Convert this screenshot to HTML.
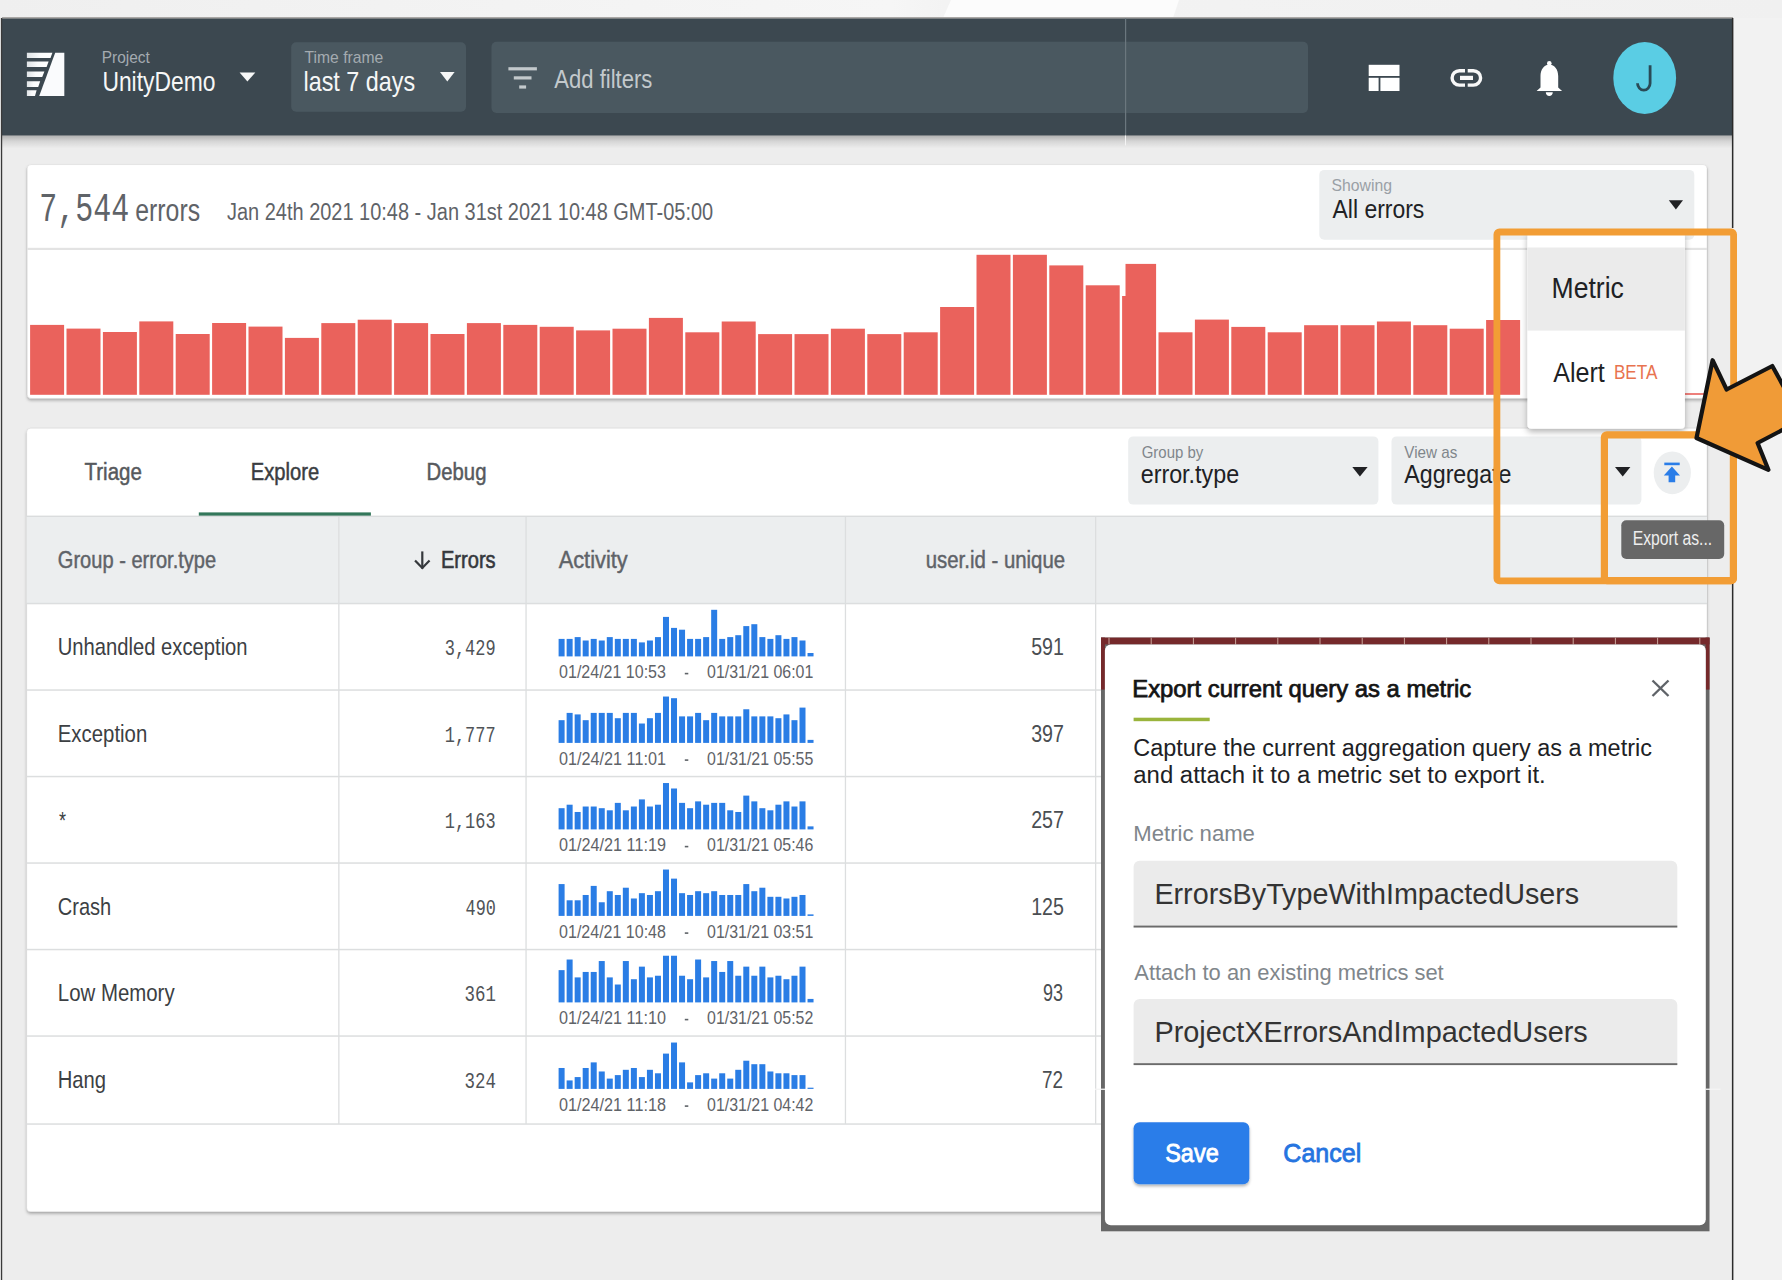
<!DOCTYPE html>
<html><head><meta charset="utf-8"><title>Backtrace explore</title>
<style>html,body{margin:0;padding:0;background:#ededed;overflow:hidden}svg{display:block}</style>
</head><body>
<svg width="1782" height="1280" viewBox="0 0 1782 1280">
<defs>
<filter id="cshadow" x="-5%" y="-5%" width="110%" height="115%"><feDropShadow dx="0" dy="2" stdDeviation="1.6" flood-color="#000" flood-opacity="0.28"/></filter>
<filter id="mshadow" x="-10%" y="-10%" width="130%" height="130%"><feDropShadow dx="0" dy="3" stdDeviation="3" flood-color="#000" flood-opacity="0.3"/></filter>
<filter id="bshadow" x="-10%" y="-10%" width="130%" height="130%"><feDropShadow dx="0" dy="2" stdDeviation="1.5" flood-color="#000" flood-opacity="0.3"/></filter>
<linearGradient id="hshadow" x1="0" y1="0" x2="0" y2="1"><stop offset="0" stop-color="#000" stop-opacity="0.26"/><stop offset="0.45" stop-color="#000" stop-opacity="0.10"/><stop offset="1" stop-color="#000" stop-opacity="0"/></linearGradient>
<linearGradient id="topg" x1="0" y1="0" x2="1" y2="0"><stop offset="0" stop-color="#efefef"/><stop offset="0.5" stop-color="#f6f6f6"/><stop offset="0.53" stop-color="#f3f3f3"/><stop offset="1" stop-color="#f0f0f0"/></linearGradient>
<linearGradient id="stripe" x1="0" y1="0" x2="1" y2="0"><stop offset="0" stop-color="#dfe3e6"/><stop offset="0.5" stop-color="#fafbfc"/><stop offset="1" stop-color="#ffffff"/></linearGradient>
</defs>
<rect x="0.00" y="0.00" width="1782.00" height="1280.00" fill="#ededed"/>
<rect x="0" y="0" width="1782" height="18" fill="url(#topg)"/>
<polygon points="951,0 1179,0 1173,18 943,18" fill="#fcfcfc"/>
<rect x="1733.00" y="18.00" width="49.00" height="1262.00" fill="#f2f2f2"/>
<rect x="2.00" y="18.00" width="1731.00" height="117.50" fill="#3c4850"/>
<rect x="2.00" y="17.00" width="1731.00" height="1.60" fill="#aaa8a6"/>
<rect x="2" y="135.4" width="1731" height="13" fill="url(#hshadow)"/>
<polygon points="55.2,52.7 64.3,52.7 64.3,95.9 39.2,95.9" fill="#fafbfd"/>
<polygon points="26.9,52.7 52.4,52.7 50.5,57.9 26.9,57.9" fill="url(#stripe)"/>
<polygon points="26.9,61.6 48.6,61.6 46.6,67.0 26.9,67.0" fill="url(#stripe)"/>
<polygon points="26.9,71.5 44.4,71.5 42.2,77.1 26.9,77.1" fill="url(#stripe)"/>
<polygon points="26.9,81.3 40.2,81.3 38.2,87.0 26.9,87.0" fill="url(#stripe)"/>
<polygon points="26.9,90.2 36.6,90.2 35.0,95.9 26.9,95.9" fill="url(#stripe)"/>
<polygon points="239.6,72.4 255.3,72.4 247.4,81.5" fill="#f6f7f7"/>
<rect x="291.20" y="42.20" width="174.80" height="69.50" fill="#4a5860" rx="5.0"/>
<polygon points="440.0,72.0 454.6,72.0 447.3,81.5" fill="#f6f7f7"/>
<rect x="491.50" y="41.70" width="816.50" height="71.20" fill="#4a5860" rx="5.0"/>
<rect x="508.40" y="67.20" width="28.50" height="3.20" fill="#c3c9cc"/>
<rect x="513.80" y="76.30" width="17.70" height="3.20" fill="#c3c9cc"/>
<rect x="519.20" y="85.40" width="6.90" height="3.20" fill="#c3c9cc"/>
<rect x="1125.00" y="18.00" width="1.20" height="117.00" fill="#6b777e"/>
<rect x="1125.00" y="135.40" width="1.00" height="10.00" fill="#f4f4f4"/>
<rect x="1368.70" y="64.80" width="30.80" height="11.20" fill="#ffffff"/>
<rect x="1368.70" y="77.80" width="9.90" height="13.20" fill="#ffffff"/>
<rect x="1380.40" y="77.80" width="19.10" height="13.20" fill="#ffffff"/>
<g fill="none" stroke="#f8f8f8" stroke-width="3.4"><path d="M1465,70.7 h-5.6 a7.3,7.2 0 0 0 0,14.4 h5.6"/><path d="M1467.7,70.7 h5.6 a7.3,7.2 0 0 1 0,14.4 h-5.6"/></g>
<rect x="1460.00" y="75.80" width="13.00" height="4.20" fill="#f8f8f8"/>
<circle cx="1549.3" cy="63.2" r="2.3" fill="#ffffff"/><path d="M1549.3,64.6 c5.3,0 8.9,5.2 8.9,11.5 V87.4 l3.9,3.6 H1536.6 l3.9,-3.6 V76.1 c0,-6.3 3.6,-11.5 8.8,-11.5 z M1545.8,92.2 h7 c0,2.2 -1.6,3.7 -3.5,3.7 s-3.5,-1.5 -3.5,-3.7 z" fill="#ffffff"/>
<ellipse cx="1644.7" cy="77.9" rx="31.4" ry="36.0" fill="#5acde4"/>
<path d="M1650.1,65.2 V83.2 A6.3,7.0 0 0 1 1637.5,83.2" fill="none" stroke="#2a4a56" stroke-width="2.8"/>
<rect x="27.2" y="164.6" width="1679.8" height="233.8" rx="4" fill="#ffffff" stroke="#000" stroke-opacity="0.07" stroke-width="1" filter="url(#cshadow)"/>
<rect x="27.20" y="247.80" width="1679.80" height="2.20" fill="#e3e3e3"/>
<rect x="1319.30" y="169.90" width="375.00" height="69.80" fill="#eceeef" rx="5.0"/>
<polygon points="1668.8,200.3 1683.0,200.3 1675.9,209.5" fill="#202124"/>
<rect x="30.10" y="324.90" width="34.00" height="69.90" fill="#ea625c"/>
<rect x="66.50" y="328.60" width="34.00" height="66.20" fill="#ea625c"/>
<rect x="102.90" y="332.00" width="34.00" height="62.80" fill="#ea625c"/>
<rect x="139.30" y="321.40" width="34.00" height="73.40" fill="#ea625c"/>
<rect x="175.70" y="334.00" width="34.00" height="60.80" fill="#ea625c"/>
<rect x="212.10" y="323.00" width="34.00" height="71.80" fill="#ea625c"/>
<rect x="248.50" y="326.60" width="34.00" height="68.20" fill="#ea625c"/>
<rect x="284.90" y="337.90" width="34.00" height="56.90" fill="#ea625c"/>
<rect x="321.30" y="323.10" width="34.00" height="71.70" fill="#ea625c"/>
<rect x="357.70" y="319.70" width="34.00" height="75.10" fill="#ea625c"/>
<rect x="394.10" y="323.10" width="34.00" height="71.70" fill="#ea625c"/>
<rect x="430.50" y="334.00" width="34.00" height="60.80" fill="#ea625c"/>
<rect x="466.90" y="323.10" width="34.00" height="71.70" fill="#ea625c"/>
<rect x="503.30" y="324.90" width="34.00" height="69.90" fill="#ea625c"/>
<rect x="539.70" y="326.80" width="34.00" height="68.00" fill="#ea625c"/>
<rect x="576.10" y="330.40" width="34.00" height="64.40" fill="#ea625c"/>
<rect x="612.50" y="328.70" width="34.00" height="66.10" fill="#ea625c"/>
<rect x="648.90" y="317.90" width="34.00" height="76.90" fill="#ea625c"/>
<rect x="685.30" y="332.30" width="34.00" height="62.50" fill="#ea625c"/>
<rect x="721.70" y="321.50" width="34.00" height="73.30" fill="#ea625c"/>
<rect x="758.10" y="334.10" width="34.00" height="60.70" fill="#ea625c"/>
<rect x="794.50" y="334.10" width="34.00" height="60.70" fill="#ea625c"/>
<rect x="830.90" y="328.70" width="34.00" height="66.10" fill="#ea625c"/>
<rect x="867.30" y="334.10" width="34.00" height="60.70" fill="#ea625c"/>
<rect x="903.70" y="332.30" width="34.00" height="62.50" fill="#ea625c"/>
<rect x="940.10" y="307.00" width="34.00" height="87.80" fill="#ea625c"/>
<rect x="976.50" y="254.80" width="34.00" height="140.00" fill="#ea625c"/>
<rect x="1012.90" y="254.80" width="34.00" height="140.00" fill="#ea625c"/>
<rect x="1049.30" y="265.40" width="34.00" height="129.40" fill="#ea625c"/>
<rect x="1085.70" y="285.30" width="34.00" height="109.50" fill="#ea625c"/>
<rect x="1122.10" y="263.90" width="34.00" height="130.90" fill="#ea625c"/>
<rect x="1158.50" y="332.30" width="34.00" height="62.50" fill="#ea625c"/>
<rect x="1194.90" y="319.60" width="34.00" height="75.20" fill="#ea625c"/>
<rect x="1231.30" y="326.90" width="34.00" height="67.90" fill="#ea625c"/>
<rect x="1267.70" y="332.30" width="34.00" height="62.50" fill="#ea625c"/>
<rect x="1304.10" y="325.20" width="34.00" height="69.60" fill="#ea625c"/>
<rect x="1340.50" y="325.20" width="34.00" height="69.60" fill="#ea625c"/>
<rect x="1376.90" y="321.50" width="34.00" height="73.30" fill="#ea625c"/>
<rect x="1413.30" y="325.20" width="34.00" height="69.60" fill="#ea625c"/>
<rect x="1449.70" y="328.70" width="34.00" height="66.10" fill="#ea625c"/>
<rect x="1486.10" y="320.00" width="34.00" height="74.80" fill="#ea625c"/>
<rect x="1121.60" y="263.00" width="3.90" height="33.00" fill="#ffffff"/>
<rect x="26.7" y="428.2" width="1680.3" height="783.6" rx="4" fill="#ffffff" stroke="#000" stroke-opacity="0.07" stroke-width="1" filter="url(#cshadow)"/>
<rect x="198.80" y="512.40" width="172.10" height="3.80" fill="#33775a"/>
<rect x="26.70" y="515.60" width="1680.30" height="1.40" fill="#dadcdd"/>
<rect x="1128.20" y="436.40" width="250.20" height="68.20" fill="#eceeef" rx="5.0"/>
<polygon points="1352.3,467.0 1367.6,467.0 1359.9,476.4" fill="#202124"/>
<rect x="1391.50" y="436.40" width="249.90" height="68.20" fill="#eceeef" rx="5.0"/>
<polygon points="1615.0,467.0 1630.4,467.0 1622.7,476.4" fill="#202124"/>
<ellipse cx="1672.3" cy="472.8" rx="18.6" ry="21.4" fill="#eceeef"/>
<rect x="1664.30" y="462.60" width="15.40" height="2.60" fill="#2a7de8"/>
<polygon points="1671.9,466.5 1680.0,475.5 1675.2,475.5 1675.2,482.2 1668.6,482.2 1668.6,475.5 1663.8,475.5" fill="#2a7de8"/>
<rect x="26.70" y="517.00" width="1680.30" height="86.00" fill="#eceeef"/>
<rect x="26.70" y="602.80" width="1680.30" height="1.50" fill="#dcdedf"/>
<rect x="26.70" y="689.30" width="1680.30" height="1.50" fill="#dcdedf"/>
<rect x="26.70" y="775.80" width="1680.30" height="1.50" fill="#dcdedf"/>
<rect x="26.70" y="862.30" width="1680.30" height="1.50" fill="#dcdedf"/>
<rect x="26.70" y="948.80" width="1680.30" height="1.50" fill="#dcdedf"/>
<rect x="26.70" y="1035.30" width="1680.30" height="1.50" fill="#dcdedf"/>
<rect x="26.70" y="1123.30" width="1680.30" height="1.50" fill="#dcdedf"/>
<rect x="338.20" y="517.00" width="1.30" height="607.00" fill="#dcdedf"/>
<rect x="525.40" y="517.00" width="1.30" height="607.00" fill="#dcdedf"/>
<rect x="844.80" y="517.00" width="1.30" height="607.00" fill="#dcdedf"/>
<rect x="1095.00" y="517.00" width="1.30" height="607.00" fill="#dcdedf"/>
<g stroke="#35383c" stroke-width="2.2" fill="none" stroke-linecap="square"><path d="M422.3,552.5 v15"/><path d="M415.8,561.2 l6.5,6.8 l6.5,-6.8"/></g>
<rect x="558.60" y="638.90" width="6.00" height="17.50" fill="#2a7de5"/>
<rect x="566.63" y="638.90" width="6.00" height="17.50" fill="#2a7de5"/>
<rect x="574.66" y="637.10" width="6.00" height="19.30" fill="#2a7de5"/>
<rect x="582.69" y="640.50" width="6.00" height="15.90" fill="#2a7de5"/>
<rect x="590.72" y="638.90" width="6.00" height="17.50" fill="#2a7de5"/>
<rect x="598.75" y="640.50" width="6.00" height="15.90" fill="#2a7de5"/>
<rect x="606.78" y="637.10" width="6.00" height="19.30" fill="#2a7de5"/>
<rect x="614.81" y="638.90" width="6.00" height="17.50" fill="#2a7de5"/>
<rect x="622.84" y="638.90" width="6.00" height="17.50" fill="#2a7de5"/>
<rect x="630.87" y="638.90" width="6.00" height="17.50" fill="#2a7de5"/>
<rect x="638.90" y="642.40" width="6.00" height="14.00" fill="#2a7de5"/>
<rect x="646.93" y="640.50" width="6.00" height="15.90" fill="#2a7de5"/>
<rect x="654.96" y="637.10" width="6.00" height="19.30" fill="#2a7de5"/>
<rect x="662.99" y="616.90" width="6.00" height="39.50" fill="#2a7de5"/>
<rect x="671.02" y="627.90" width="6.00" height="28.50" fill="#2a7de5"/>
<rect x="679.05" y="629.70" width="6.00" height="26.70" fill="#2a7de5"/>
<rect x="687.08" y="638.90" width="6.00" height="17.50" fill="#2a7de5"/>
<rect x="695.11" y="638.90" width="6.00" height="17.50" fill="#2a7de5"/>
<rect x="703.14" y="637.10" width="6.00" height="19.30" fill="#2a7de5"/>
<rect x="711.17" y="609.80" width="6.00" height="46.60" fill="#2a7de5"/>
<rect x="719.20" y="638.90" width="6.00" height="17.50" fill="#2a7de5"/>
<rect x="727.23" y="637.10" width="6.00" height="19.30" fill="#2a7de5"/>
<rect x="735.26" y="635.20" width="6.00" height="21.20" fill="#2a7de5"/>
<rect x="743.29" y="626.10" width="6.00" height="30.30" fill="#2a7de5"/>
<rect x="751.32" y="624.20" width="6.00" height="32.20" fill="#2a7de5"/>
<rect x="759.35" y="637.10" width="6.00" height="19.30" fill="#2a7de5"/>
<rect x="767.38" y="638.90" width="6.00" height="17.50" fill="#2a7de5"/>
<rect x="775.41" y="635.20" width="6.00" height="21.20" fill="#2a7de5"/>
<rect x="783.44" y="638.90" width="6.00" height="17.50" fill="#2a7de5"/>
<rect x="791.47" y="637.10" width="6.00" height="19.30" fill="#2a7de5"/>
<rect x="799.50" y="640.50" width="6.00" height="15.90" fill="#2a7de5"/>
<rect x="807.53" y="653.00" width="6.00" height="3.40" fill="#2a7de5"/>
<rect x="558.60" y="720.17" width="6.00" height="22.73" fill="#2a7de5"/>
<rect x="566.63" y="712.90" width="6.00" height="30.00" fill="#2a7de5"/>
<rect x="574.66" y="714.42" width="6.00" height="28.48" fill="#2a7de5"/>
<rect x="582.69" y="720.17" width="6.00" height="22.73" fill="#2a7de5"/>
<rect x="590.72" y="712.90" width="6.00" height="30.00" fill="#2a7de5"/>
<rect x="598.75" y="712.90" width="6.00" height="30.00" fill="#2a7de5"/>
<rect x="606.78" y="712.90" width="6.00" height="30.00" fill="#2a7de5"/>
<rect x="614.81" y="718.20" width="6.00" height="24.70" fill="#2a7de5"/>
<rect x="622.84" y="712.90" width="6.00" height="30.00" fill="#2a7de5"/>
<rect x="630.87" y="712.90" width="6.00" height="30.00" fill="#2a7de5"/>
<rect x="638.90" y="723.51" width="6.00" height="19.39" fill="#2a7de5"/>
<rect x="646.93" y="718.20" width="6.00" height="24.70" fill="#2a7de5"/>
<rect x="654.96" y="712.90" width="6.00" height="30.00" fill="#2a7de5"/>
<rect x="662.99" y="696.54" width="6.00" height="46.36" fill="#2a7de5"/>
<rect x="671.02" y="698.20" width="6.00" height="44.70" fill="#2a7de5"/>
<rect x="679.05" y="716.38" width="6.00" height="26.52" fill="#2a7de5"/>
<rect x="687.08" y="716.38" width="6.00" height="26.52" fill="#2a7de5"/>
<rect x="695.11" y="712.90" width="6.00" height="30.00" fill="#2a7de5"/>
<rect x="703.14" y="720.17" width="6.00" height="22.73" fill="#2a7de5"/>
<rect x="711.17" y="712.90" width="6.00" height="30.00" fill="#2a7de5"/>
<rect x="719.20" y="716.38" width="6.00" height="26.52" fill="#2a7de5"/>
<rect x="727.23" y="716.38" width="6.00" height="26.52" fill="#2a7de5"/>
<rect x="735.26" y="716.38" width="6.00" height="26.52" fill="#2a7de5"/>
<rect x="743.29" y="709.26" width="6.00" height="33.64" fill="#2a7de5"/>
<rect x="751.32" y="716.38" width="6.00" height="26.52" fill="#2a7de5"/>
<rect x="759.35" y="716.38" width="6.00" height="26.52" fill="#2a7de5"/>
<rect x="767.38" y="716.38" width="6.00" height="26.52" fill="#2a7de5"/>
<rect x="775.41" y="718.20" width="6.00" height="24.70" fill="#2a7de5"/>
<rect x="783.44" y="714.42" width="6.00" height="28.48" fill="#2a7de5"/>
<rect x="791.47" y="720.17" width="6.00" height="22.73" fill="#2a7de5"/>
<rect x="799.50" y="707.60" width="6.00" height="35.30" fill="#2a7de5"/>
<rect x="807.53" y="739.87" width="6.00" height="3.03" fill="#2a7de5"/>
<rect x="558.60" y="808.19" width="6.00" height="21.21" fill="#2a7de5"/>
<rect x="566.63" y="804.70" width="6.00" height="24.70" fill="#2a7de5"/>
<rect x="574.66" y="811.98" width="6.00" height="17.42" fill="#2a7de5"/>
<rect x="582.69" y="806.52" width="6.00" height="22.88" fill="#2a7de5"/>
<rect x="590.72" y="806.52" width="6.00" height="22.88" fill="#2a7de5"/>
<rect x="598.75" y="808.19" width="6.00" height="21.21" fill="#2a7de5"/>
<rect x="606.78" y="810.31" width="6.00" height="19.09" fill="#2a7de5"/>
<rect x="614.81" y="802.88" width="6.00" height="26.52" fill="#2a7de5"/>
<rect x="622.84" y="810.31" width="6.00" height="19.09" fill="#2a7de5"/>
<rect x="630.87" y="806.52" width="6.00" height="22.88" fill="#2a7de5"/>
<rect x="638.90" y="799.40" width="6.00" height="30.00" fill="#2a7de5"/>
<rect x="646.93" y="806.52" width="6.00" height="22.88" fill="#2a7de5"/>
<rect x="654.96" y="804.70" width="6.00" height="24.70" fill="#2a7de5"/>
<rect x="662.99" y="783.04" width="6.00" height="46.36" fill="#2a7de5"/>
<rect x="671.02" y="788.49" width="6.00" height="40.91" fill="#2a7de5"/>
<rect x="679.05" y="802.88" width="6.00" height="26.52" fill="#2a7de5"/>
<rect x="687.08" y="808.19" width="6.00" height="21.21" fill="#2a7de5"/>
<rect x="695.11" y="801.37" width="6.00" height="28.03" fill="#2a7de5"/>
<rect x="703.14" y="804.70" width="6.00" height="24.70" fill="#2a7de5"/>
<rect x="711.17" y="802.88" width="6.00" height="26.52" fill="#2a7de5"/>
<rect x="719.20" y="802.88" width="6.00" height="26.52" fill="#2a7de5"/>
<rect x="727.23" y="810.31" width="6.00" height="19.09" fill="#2a7de5"/>
<rect x="735.26" y="811.98" width="6.00" height="17.42" fill="#2a7de5"/>
<rect x="743.29" y="795.61" width="6.00" height="33.79" fill="#2a7de5"/>
<rect x="751.32" y="801.37" width="6.00" height="28.03" fill="#2a7de5"/>
<rect x="759.35" y="808.19" width="6.00" height="21.21" fill="#2a7de5"/>
<rect x="767.38" y="810.31" width="6.00" height="19.09" fill="#2a7de5"/>
<rect x="775.41" y="804.70" width="6.00" height="24.70" fill="#2a7de5"/>
<rect x="783.44" y="801.37" width="6.00" height="28.03" fill="#2a7de5"/>
<rect x="791.47" y="806.52" width="6.00" height="22.88" fill="#2a7de5"/>
<rect x="799.50" y="801.37" width="6.00" height="28.03" fill="#2a7de5"/>
<rect x="807.53" y="826.37" width="6.00" height="3.03" fill="#2a7de5"/>
<rect x="558.60" y="884.08" width="6.00" height="31.82" fill="#2a7de5"/>
<rect x="566.63" y="900.29" width="6.00" height="15.61" fill="#2a7de5"/>
<rect x="574.66" y="900.29" width="6.00" height="15.61" fill="#2a7de5"/>
<rect x="582.69" y="894.99" width="6.00" height="20.91" fill="#2a7de5"/>
<rect x="590.72" y="885.90" width="6.00" height="30.00" fill="#2a7de5"/>
<rect x="598.75" y="902.26" width="6.00" height="13.64" fill="#2a7de5"/>
<rect x="606.78" y="891.20" width="6.00" height="24.70" fill="#2a7de5"/>
<rect x="614.81" y="894.99" width="6.00" height="20.91" fill="#2a7de5"/>
<rect x="622.84" y="887.72" width="6.00" height="28.18" fill="#2a7de5"/>
<rect x="630.87" y="898.48" width="6.00" height="17.42" fill="#2a7de5"/>
<rect x="638.90" y="893.17" width="6.00" height="22.73" fill="#2a7de5"/>
<rect x="646.93" y="894.99" width="6.00" height="20.91" fill="#2a7de5"/>
<rect x="654.96" y="891.20" width="6.00" height="24.70" fill="#2a7de5"/>
<rect x="662.99" y="869.54" width="6.00" height="46.36" fill="#2a7de5"/>
<rect x="671.02" y="878.63" width="6.00" height="37.27" fill="#2a7de5"/>
<rect x="679.05" y="893.17" width="6.00" height="22.73" fill="#2a7de5"/>
<rect x="687.08" y="894.99" width="6.00" height="20.91" fill="#2a7de5"/>
<rect x="695.11" y="891.20" width="6.00" height="24.70" fill="#2a7de5"/>
<rect x="703.14" y="893.17" width="6.00" height="22.73" fill="#2a7de5"/>
<rect x="711.17" y="891.20" width="6.00" height="24.70" fill="#2a7de5"/>
<rect x="719.20" y="894.99" width="6.00" height="20.91" fill="#2a7de5"/>
<rect x="727.23" y="894.99" width="6.00" height="20.91" fill="#2a7de5"/>
<rect x="735.26" y="894.99" width="6.00" height="20.91" fill="#2a7de5"/>
<rect x="743.29" y="884.08" width="6.00" height="31.82" fill="#2a7de5"/>
<rect x="751.32" y="891.20" width="6.00" height="24.70" fill="#2a7de5"/>
<rect x="759.35" y="887.72" width="6.00" height="28.18" fill="#2a7de5"/>
<rect x="767.38" y="896.81" width="6.00" height="19.09" fill="#2a7de5"/>
<rect x="775.41" y="896.81" width="6.00" height="19.09" fill="#2a7de5"/>
<rect x="783.44" y="898.48" width="6.00" height="17.42" fill="#2a7de5"/>
<rect x="791.47" y="896.81" width="6.00" height="19.09" fill="#2a7de5"/>
<rect x="799.50" y="894.99" width="6.00" height="20.91" fill="#2a7de5"/>
<rect x="807.53" y="914.38" width="6.00" height="1.52" fill="#2a7de5"/>
<rect x="558.60" y="970.13" width="6.00" height="32.27" fill="#2a7de5"/>
<rect x="566.63" y="959.52" width="6.00" height="42.88" fill="#2a7de5"/>
<rect x="574.66" y="977.40" width="6.00" height="25.00" fill="#2a7de5"/>
<rect x="582.69" y="971.95" width="6.00" height="30.45" fill="#2a7de5"/>
<rect x="590.72" y="971.95" width="6.00" height="30.45" fill="#2a7de5"/>
<rect x="598.75" y="961.04" width="6.00" height="41.36" fill="#2a7de5"/>
<rect x="606.78" y="977.40" width="6.00" height="25.00" fill="#2a7de5"/>
<rect x="614.81" y="984.52" width="6.00" height="17.88" fill="#2a7de5"/>
<rect x="622.84" y="961.04" width="6.00" height="41.36" fill="#2a7de5"/>
<rect x="630.87" y="979.22" width="6.00" height="23.18" fill="#2a7de5"/>
<rect x="638.90" y="966.64" width="6.00" height="35.76" fill="#2a7de5"/>
<rect x="646.93" y="977.40" width="6.00" height="25.00" fill="#2a7de5"/>
<rect x="654.96" y="975.73" width="6.00" height="26.67" fill="#2a7de5"/>
<rect x="662.99" y="955.73" width="6.00" height="46.67" fill="#2a7de5"/>
<rect x="671.02" y="955.73" width="6.00" height="46.67" fill="#2a7de5"/>
<rect x="679.05" y="975.73" width="6.00" height="26.67" fill="#2a7de5"/>
<rect x="687.08" y="979.22" width="6.00" height="23.18" fill="#2a7de5"/>
<rect x="695.11" y="959.52" width="6.00" height="42.88" fill="#2a7de5"/>
<rect x="703.14" y="977.40" width="6.00" height="25.00" fill="#2a7de5"/>
<rect x="711.17" y="961.04" width="6.00" height="41.36" fill="#2a7de5"/>
<rect x="719.20" y="971.95" width="6.00" height="30.45" fill="#2a7de5"/>
<rect x="727.23" y="961.04" width="6.00" height="41.36" fill="#2a7de5"/>
<rect x="735.26" y="975.73" width="6.00" height="26.67" fill="#2a7de5"/>
<rect x="743.29" y="966.64" width="6.00" height="35.76" fill="#2a7de5"/>
<rect x="751.32" y="975.73" width="6.00" height="26.67" fill="#2a7de5"/>
<rect x="759.35" y="966.64" width="6.00" height="35.76" fill="#2a7de5"/>
<rect x="767.38" y="977.40" width="6.00" height="25.00" fill="#2a7de5"/>
<rect x="775.41" y="975.73" width="6.00" height="26.67" fill="#2a7de5"/>
<rect x="783.44" y="979.22" width="6.00" height="23.18" fill="#2a7de5"/>
<rect x="791.47" y="975.73" width="6.00" height="26.67" fill="#2a7de5"/>
<rect x="799.50" y="966.64" width="6.00" height="35.76" fill="#2a7de5"/>
<rect x="807.53" y="998.92" width="6.00" height="3.48" fill="#2a7de5"/>
<rect x="558.60" y="1067.99" width="6.00" height="20.91" fill="#2a7de5"/>
<rect x="566.63" y="1080.42" width="6.00" height="8.48" fill="#2a7de5"/>
<rect x="574.66" y="1077.08" width="6.00" height="11.82" fill="#2a7de5"/>
<rect x="582.69" y="1067.99" width="6.00" height="20.91" fill="#2a7de5"/>
<rect x="590.72" y="1062.38" width="6.00" height="26.52" fill="#2a7de5"/>
<rect x="598.75" y="1071.48" width="6.00" height="17.42" fill="#2a7de5"/>
<rect x="606.78" y="1078.60" width="6.00" height="10.30" fill="#2a7de5"/>
<rect x="614.81" y="1075.11" width="6.00" height="13.79" fill="#2a7de5"/>
<rect x="622.84" y="1069.81" width="6.00" height="19.09" fill="#2a7de5"/>
<rect x="630.87" y="1067.99" width="6.00" height="20.91" fill="#2a7de5"/>
<rect x="638.90" y="1077.08" width="6.00" height="11.82" fill="#2a7de5"/>
<rect x="646.93" y="1069.81" width="6.00" height="19.09" fill="#2a7de5"/>
<rect x="654.96" y="1073.29" width="6.00" height="15.61" fill="#2a7de5"/>
<rect x="662.99" y="1053.60" width="6.00" height="35.30" fill="#2a7de5"/>
<rect x="671.02" y="1042.54" width="6.00" height="46.36" fill="#2a7de5"/>
<rect x="679.05" y="1062.38" width="6.00" height="26.52" fill="#2a7de5"/>
<rect x="687.08" y="1082.38" width="6.00" height="6.52" fill="#2a7de5"/>
<rect x="695.11" y="1075.11" width="6.00" height="13.79" fill="#2a7de5"/>
<rect x="703.14" y="1073.29" width="6.00" height="15.61" fill="#2a7de5"/>
<rect x="711.17" y="1078.60" width="6.00" height="10.30" fill="#2a7de5"/>
<rect x="719.20" y="1073.29" width="6.00" height="15.61" fill="#2a7de5"/>
<rect x="727.23" y="1078.60" width="6.00" height="10.30" fill="#2a7de5"/>
<rect x="735.26" y="1069.81" width="6.00" height="19.09" fill="#2a7de5"/>
<rect x="743.29" y="1060.72" width="6.00" height="28.18" fill="#2a7de5"/>
<rect x="751.32" y="1064.20" width="6.00" height="24.70" fill="#2a7de5"/>
<rect x="759.35" y="1064.20" width="6.00" height="24.70" fill="#2a7de5"/>
<rect x="767.38" y="1071.48" width="6.00" height="17.42" fill="#2a7de5"/>
<rect x="775.41" y="1073.29" width="6.00" height="15.61" fill="#2a7de5"/>
<rect x="783.44" y="1073.29" width="6.00" height="15.61" fill="#2a7de5"/>
<rect x="791.47" y="1075.11" width="6.00" height="13.79" fill="#2a7de5"/>
<rect x="799.50" y="1075.11" width="6.00" height="13.79" fill="#2a7de5"/>
<rect x="807.53" y="1087.69" width="6.00" height="1.21" fill="#2a7de5"/>
<rect x="1685.00" y="393.20" width="20.00" height="1.60" fill="#ea625c"/>
<rect x="1527.4" y="232" width="157.5" height="196.8" rx="4" fill="#ffffff" filter="url(#mshadow)"/>
<rect x="1527.40" y="247.50" width="157.50" height="83.10" fill="#ebebeb"/>
<rect x="1621.30" y="520.20" width="102.90" height="38.80" fill="#676767" rx="5.0"/>
<rect x="1101.00" y="637.60" width="608.50" height="593.70" fill="#676767"/>
<rect x="1101.00" y="637.60" width="608.50" height="6.80" fill="#75292b"/>
<rect x="1101.00" y="637.60" width="3.90" height="52.00" fill="#75292b"/>
<rect x="1705.60" y="637.60" width="3.90" height="52.00" fill="#75292b"/>
<rect x="1108.50" y="637.60" width="1.00" height="6.80" fill="#c9a59b"/>
<rect x="1150.70" y="637.60" width="1.00" height="6.80" fill="#c9a59b"/>
<rect x="1192.90" y="637.60" width="1.00" height="6.80" fill="#c9a59b"/>
<rect x="1235.10" y="637.60" width="1.00" height="6.80" fill="#c9a59b"/>
<rect x="1277.30" y="637.60" width="1.00" height="6.80" fill="#c9a59b"/>
<rect x="1319.50" y="637.60" width="1.00" height="6.80" fill="#c9a59b"/>
<rect x="1361.70" y="637.60" width="1.00" height="6.80" fill="#c9a59b"/>
<rect x="1403.90" y="637.60" width="1.00" height="6.80" fill="#c9a59b"/>
<rect x="1446.10" y="637.60" width="1.00" height="6.80" fill="#c9a59b"/>
<rect x="1488.30" y="637.60" width="1.00" height="6.80" fill="#c9a59b"/>
<rect x="1530.50" y="637.60" width="1.00" height="6.80" fill="#c9a59b"/>
<rect x="1572.70" y="637.60" width="1.00" height="6.80" fill="#c9a59b"/>
<rect x="1614.90" y="637.60" width="1.00" height="6.80" fill="#c9a59b"/>
<rect x="1657.10" y="637.60" width="1.00" height="6.80" fill="#c9a59b"/>
<rect x="1699.30" y="637.60" width="1.00" height="6.80" fill="#c9a59b"/>
<rect x="1104.90" y="644.40" width="600.90" height="580.80" fill="#ffffff" rx="6.0"/>
<rect x="1095.00" y="1088.60" width="10.00" height="1.30" fill="#f4f4f4"/>
<rect x="1705.60" y="1088.60" width="15.00" height="1.30" fill="#f4f4f4"/>
<g stroke="#5f6368" stroke-width="2.4"><path d="M1652.5,680.5 L1668.5,696.0"/><path d="M1668.5,680.5 L1652.5,696.0"/></g>
<rect x="1133.60" y="717.70" width="76.10" height="3.50" fill="#9ab43c"/>
<path d="M1133.6,927.4 V866.8 a6,6 0 0 1 6,-6 H1671.3 a6,6 0 0 1 6,6 V927.4 z" fill="#ebebeb"/>
<rect x="1133.60" y="925.60" width="543.70" height="1.90" fill="#6b6b6b"/>
<path d="M1133.6,1065.0 V1005.1 a6,6 0 0 1 6,-6 H1671.3 a6,6 0 0 1 6,6 V1065.0 z" fill="#ebebeb"/>
<rect x="1133.60" y="1063.20" width="543.70" height="1.90" fill="#6b6b6b"/>
<rect x="1133.6" y="1122.2" width="115.7" height="62.1" rx="6" fill="#2b7de9" filter="url(#bshadow)"/>
<rect x="0.90" y="18.00" width="1.30" height="1262.00" fill="#3a3a3a"/>
<text x="101.79" y="63.40" style="font-family:Liberation Sans" font-size="17.25" fill="#a4abb0" textLength="48.01" lengthAdjust="spacingAndGlyphs">Project</text>
<text x="102.39" y="90.60" style="font-family:Liberation Sans" font-size="26.96" fill="#f6f7f7" textLength="113.01" lengthAdjust="spacingAndGlyphs">UnityDemo</text>
<text x="304.50" y="63.40" style="font-family:Liberation Sans" font-size="17.39" fill="#a4abb0" textLength="78.80" lengthAdjust="spacingAndGlyphs">Time frame</text>
<text x="303.49" y="90.50" style="font-family:Liberation Sans" font-size="26.96" fill="#f6f7f7" textLength="111.62" lengthAdjust="spacingAndGlyphs">last 7 days</text>
<text x="554.30" y="87.60" style="font-family:Liberation Sans" font-size="26.23" fill="#c3c9cc" textLength="98.00" lengthAdjust="spacingAndGlyphs">Add filters</text>
<text x="39.22" y="220.70" style="font-family:Liberation Mono" font-size="40.91" fill="#5f6368" textLength="89.94" lengthAdjust="spacingAndGlyphs">7,544</text>
<text x="135.29" y="220.70" style="font-family:Liberation Sans" font-size="31.88" fill="#5f6368" textLength="64.81" lengthAdjust="spacingAndGlyphs">errors</text>
<text x="227.00" y="220.30" style="font-family:Liberation Sans" font-size="24.35" fill="#5f6368" textLength="486.20" lengthAdjust="spacingAndGlyphs">Jan 24th 2021 10:48 - Jan 31st 2021 10:48 GMT-05:00</text>
<text x="1331.47" y="191.30" style="font-family:Liberation Sans" font-size="16.96" fill="#9aa0a6" textLength="60.45" lengthAdjust="spacingAndGlyphs">Showing</text>
<text x="1332.50" y="217.70" style="font-family:Liberation Sans" font-size="24.93" fill="#202124" textLength="91.80" lengthAdjust="spacingAndGlyphs">All errors</text>
<text x="1551.52" y="297.80" style="font-family:Liberation Sans" font-size="28.70" fill="#202124" textLength="72.30" lengthAdjust="spacingAndGlyphs">Metric</text>
<text x="1553.20" y="381.60" style="font-family:Liberation Sans" font-size="28.12" fill="#202124" textLength="51.60" lengthAdjust="spacingAndGlyphs">Alert</text>
<text x="1613.89" y="379.40" style="font-family:Liberation Sans" font-size="20.00" fill="#e8734f" textLength="43.60" lengthAdjust="spacingAndGlyphs">BETA</text>
<text x="84.50" y="480.30" style="font-family:Liberation Sans" font-size="24.64" fill="#56595d" stroke="#56595d" stroke-width="0.50" textLength="57.41" lengthAdjust="spacingAndGlyphs">Triage</text>
<text x="250.77" y="480.30" style="font-family:Liberation Sans" font-size="24.64" fill="#3a3d41" stroke="#3a3d41" stroke-width="0.50" textLength="68.44" lengthAdjust="spacingAndGlyphs">Explore</text>
<text x="426.56" y="480.30" style="font-family:Liberation Sans" font-size="24.64" fill="#56595d" stroke="#56595d" stroke-width="0.50" textLength="59.90" lengthAdjust="spacingAndGlyphs">Debug</text>
<text x="1141.70" y="458.20" style="font-family:Liberation Sans" font-size="16.96" fill="#80868b" textLength="61.60" lengthAdjust="spacingAndGlyphs">Group by</text>
<text x="1140.69" y="482.90" style="font-family:Liberation Sans" font-size="25.51" fill="#202124" textLength="98.42" lengthAdjust="spacingAndGlyphs">error.type</text>
<text x="1404.30" y="458.20" style="font-family:Liberation Sans" font-size="16.96" fill="#80868b" textLength="53.00" lengthAdjust="spacingAndGlyphs">View as</text>
<text x="1404.30" y="482.90" style="font-family:Liberation Sans" font-size="25.36" fill="#202124" textLength="107.20" lengthAdjust="spacingAndGlyphs">Aggregate</text>
<text x="1632.68" y="545.40" style="font-family:Liberation Sans" font-size="20.58" fill="#eeeeee" textLength="79.44" lengthAdjust="spacingAndGlyphs">Export as...</text>
<text x="57.79" y="568.20" style="font-family:Liberation Sans" font-size="23.77" fill="#5f6368" stroke="#5f6368" stroke-width="0.45" textLength="158.41" lengthAdjust="spacingAndGlyphs">Group - error.type</text>
<text x="440.96" y="568.20" style="font-family:Liberation Sans" font-size="23.77" fill="#35383c" stroke="#35383c" stroke-width="0.60" textLength="54.66" lengthAdjust="spacingAndGlyphs">Errors</text>
<text x="558.70" y="568.20" style="font-family:Liberation Sans" font-size="23.77" fill="#5f6368" stroke="#5f6368" stroke-width="0.45" textLength="69.00" lengthAdjust="spacingAndGlyphs">Activity</text>
<text x="925.69" y="568.20" style="font-family:Liberation Sans" font-size="23.77" fill="#5f6368" stroke="#5f6368" stroke-width="0.45" textLength="139.42" lengthAdjust="spacingAndGlyphs">user.id - unique</text>
<text x="57.79" y="655.20" style="font-family:Liberation Sans" font-size="24.20" fill="#3c4043" textLength="189.82" lengthAdjust="spacingAndGlyphs">Unhandled exception</text>
<text x="444.77" y="655.20" style="font-family:Liberation Mono" font-size="22.73" fill="#505357" textLength="50.84" lengthAdjust="spacingAndGlyphs">3,429</text>
<text x="1031.14" y="655.20" style="font-family:Liberation Sans" font-size="23.77" fill="#4a4e52" textLength="32.71" lengthAdjust="spacingAndGlyphs">591</text>
<text x="559.10" y="678.30" style="font-family:Liberation Sans" font-size="18.26" fill="#5f6368" textLength="106.80" lengthAdjust="spacingAndGlyphs">01/24/21 10:53</text>
<rect x="684.8" y="672.8" width="3.5" height="1.6" fill="#5f6368"/>
<text x="707.10" y="678.30" style="font-family:Liberation Sans" font-size="18.26" fill="#5f6368" textLength="106.20" lengthAdjust="spacingAndGlyphs">01/31/21 06:01</text>
<text x="57.77" y="741.70" style="font-family:Liberation Sans" font-size="24.20" fill="#3c4043" textLength="89.46" lengthAdjust="spacingAndGlyphs">Exception</text>
<text x="444.77" y="741.70" style="font-family:Liberation Mono" font-size="22.73" fill="#505357" textLength="50.84" lengthAdjust="spacingAndGlyphs">1,777</text>
<text x="1031.14" y="741.70" style="font-family:Liberation Sans" font-size="23.77" fill="#4a4e52" textLength="32.71" lengthAdjust="spacingAndGlyphs">397</text>
<text x="559.10" y="764.80" style="font-family:Liberation Sans" font-size="18.26" fill="#5f6368" textLength="106.80" lengthAdjust="spacingAndGlyphs">01/24/21 11:01</text>
<rect x="684.8" y="759.3" width="3.5" height="1.6" fill="#5f6368"/>
<text x="707.10" y="764.80" style="font-family:Liberation Sans" font-size="18.26" fill="#5f6368" textLength="106.20" lengthAdjust="spacingAndGlyphs">01/31/21 05:55</text>
<text x="58.90" y="828.70" style="font-family:Liberation Sans" font-size="23.19" fill="#3c4043" textLength="7.03" lengthAdjust="spacingAndGlyphs">*</text>
<text x="444.77" y="828.20" style="font-family:Liberation Mono" font-size="22.73" fill="#505357" textLength="50.84" lengthAdjust="spacingAndGlyphs">1,163</text>
<text x="1031.14" y="828.20" style="font-family:Liberation Sans" font-size="23.77" fill="#4a4e52" textLength="32.71" lengthAdjust="spacingAndGlyphs">257</text>
<text x="559.10" y="851.30" style="font-family:Liberation Sans" font-size="18.26" fill="#5f6368" textLength="106.80" lengthAdjust="spacingAndGlyphs">01/24/21 11:19</text>
<rect x="684.8" y="845.8" width="3.5" height="1.6" fill="#5f6368"/>
<text x="707.10" y="851.30" style="font-family:Liberation Sans" font-size="18.26" fill="#5f6368" textLength="106.20" lengthAdjust="spacingAndGlyphs">01/31/21 05:46</text>
<text x="57.76" y="914.70" style="font-family:Liberation Sans" font-size="24.20" fill="#3c4043" textLength="53.50" lengthAdjust="spacingAndGlyphs">Crash</text>
<text x="465.56" y="914.70" style="font-family:Liberation Mono" font-size="22.73" fill="#505357" textLength="30.29" lengthAdjust="spacingAndGlyphs">490</text>
<text x="1031.14" y="914.70" style="font-family:Liberation Sans" font-size="23.77" fill="#4a4e52" textLength="32.71" lengthAdjust="spacingAndGlyphs">125</text>
<text x="559.10" y="937.80" style="font-family:Liberation Sans" font-size="18.26" fill="#5f6368" textLength="106.80" lengthAdjust="spacingAndGlyphs">01/24/21 10:48</text>
<rect x="684.8" y="932.3" width="3.5" height="1.6" fill="#5f6368"/>
<text x="707.10" y="937.80" style="font-family:Liberation Sans" font-size="18.26" fill="#5f6368" textLength="106.20" lengthAdjust="spacingAndGlyphs">01/31/21 03:51</text>
<text x="57.79" y="1001.20" style="font-family:Liberation Sans" font-size="24.20" fill="#3c4043" textLength="116.81" lengthAdjust="spacingAndGlyphs">Low Memory</text>
<text x="464.50" y="1001.20" style="font-family:Liberation Mono" font-size="22.73" fill="#505357" textLength="31.38" lengthAdjust="spacingAndGlyphs">361</text>
<text x="1043.00" y="1001.20" style="font-family:Liberation Sans" font-size="23.77" fill="#4a4e52" textLength="20.00" lengthAdjust="spacingAndGlyphs">93</text>
<text x="559.10" y="1024.30" style="font-family:Liberation Sans" font-size="18.26" fill="#5f6368" textLength="106.80" lengthAdjust="spacingAndGlyphs">01/24/21 11:10</text>
<rect x="684.8" y="1018.8" width="3.5" height="1.6" fill="#5f6368"/>
<text x="707.10" y="1024.30" style="font-family:Liberation Sans" font-size="18.26" fill="#5f6368" textLength="106.20" lengthAdjust="spacingAndGlyphs">01/31/21 05:52</text>
<text x="57.76" y="1087.70" style="font-family:Liberation Sans" font-size="24.20" fill="#3c4043" textLength="48.26" lengthAdjust="spacingAndGlyphs">Hang</text>
<text x="464.50" y="1087.70" style="font-family:Liberation Mono" font-size="22.73" fill="#505357" textLength="31.38" lengthAdjust="spacingAndGlyphs">324</text>
<text x="1041.95" y="1087.70" style="font-family:Liberation Sans" font-size="23.77" fill="#4a4e52" textLength="21.05" lengthAdjust="spacingAndGlyphs">72</text>
<text x="559.10" y="1110.80" style="font-family:Liberation Sans" font-size="18.26" fill="#5f6368" textLength="106.80" lengthAdjust="spacingAndGlyphs">01/24/21 11:18</text>
<rect x="684.8" y="1105.3" width="3.5" height="1.6" fill="#5f6368"/>
<text x="707.10" y="1110.80" style="font-family:Liberation Sans" font-size="18.26" fill="#5f6368" textLength="106.20" lengthAdjust="spacingAndGlyphs">01/31/21 04:42</text>
<text x="1132.28" y="697.30" style="font-family:Liberation Sans" font-size="23.77" fill="#141414" stroke="#141414" stroke-width="0.75" textLength="339.03" lengthAdjust="spacingAndGlyphs">Export current query as a metric</text>
<text x="1133.30" y="756.30" style="font-family:Liberation Sans" font-size="24.64" fill="#202124" textLength="518.60" lengthAdjust="spacingAndGlyphs">Capture the current aggregation query as a metric</text>
<text x="1133.29" y="782.60" style="font-family:Liberation Sans" font-size="24.64" fill="#202124" textLength="412.42" lengthAdjust="spacingAndGlyphs">and attach it to a metric set to export it.</text>
<text x="1133.29" y="840.50" style="font-family:Liberation Sans" font-size="22.90" fill="#80868b" textLength="121.61" lengthAdjust="spacingAndGlyphs">Metric name</text>
<text x="1154.39" y="904.30" style="font-family:Liberation Sans" font-size="28.99" fill="#333333" textLength="424.82" lengthAdjust="spacingAndGlyphs">ErrorsByTypeWithImpactedUsers</text>
<text x="1134.30" y="979.80" style="font-family:Liberation Sans" font-size="22.90" fill="#80868b" textLength="309.40" lengthAdjust="spacingAndGlyphs">Attach to an existing metrics set</text>
<text x="1154.39" y="1042.20" style="font-family:Liberation Sans" font-size="29.42" fill="#333333" textLength="433.42" lengthAdjust="spacingAndGlyphs">ProjectXErrorsAndImpactedUsers</text>
<text x="1165.20" y="1162.20" style="font-family:Liberation Sans" font-size="25.36" fill="#ffffff" stroke="#ffffff" stroke-width="0.80" textLength="53.60" lengthAdjust="spacingAndGlyphs">Save</text>
<text x="1283.37" y="1162.20" style="font-family:Liberation Sans" font-size="25.36" fill="#2574e0" stroke="#2574e0" stroke-width="0.80" textLength="77.88" lengthAdjust="spacingAndGlyphs">Cancel</text>
<rect x="1731.9" y="583" width="1.5" height="697" fill="#2a2a2a"/>
<rect x="1731.90" y="18.00" width="1.50" height="210.00" fill="#2a2a2a"/>
<rect x="1496.90" y="232.00" width="236.70" height="348.80" rx="2.5" fill="none" stroke="#f29d35" stroke-width="6.80"/>
<rect x="1604.40" y="434.80" width="129.00" height="145.80" rx="2.5" fill="none" stroke="#f29d35" stroke-width="7.20"/>
<polygon points="1696.5,438.0 1712.6,360.2 1726.6,389.5 1772.3,366.0 1790,398 1790,426 1757.6,443.0 1768.4,469.8" fill="#f09b37" stroke="#141414" stroke-width="4.2" stroke-linejoin="round"/>
</svg>
</body></html>
